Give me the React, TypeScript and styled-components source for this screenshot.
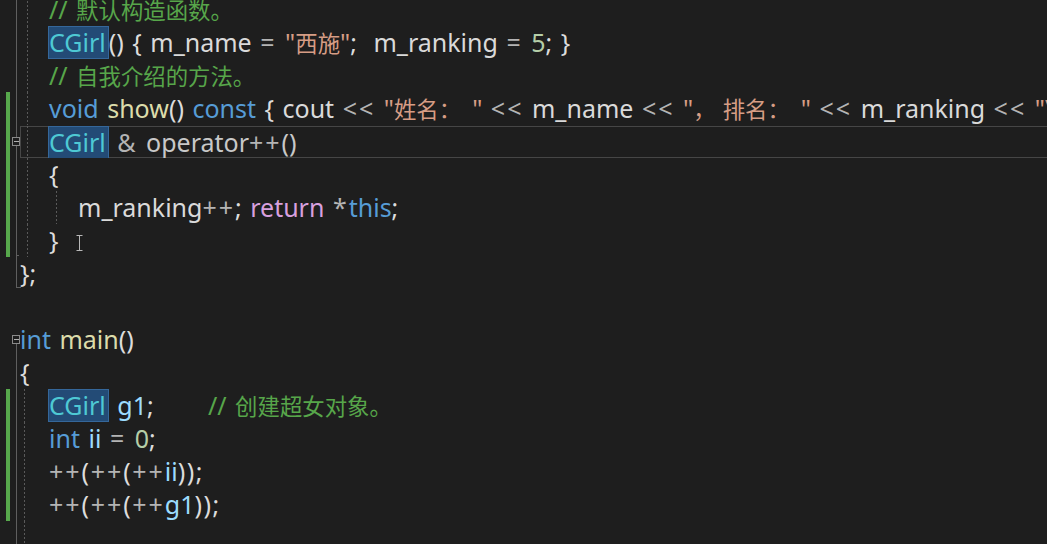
import React from "react";
import styled, { createGlobalStyle, css } from "styled-components";

const Global = createGlobalStyle`
  html, body { margin: 0; padding: 0; background: #1e1e1e; }
  body { width: 1047px; height: 544px; overflow: hidden; }
`;

const Editor = styled.div`
  width: 1047px;
  height: 544px;
  overflow: hidden;
  background: #1e1e1e;
  font-family: "Noto Sans", "Noto Sans CJK SC", sans-serif;
  font-size: 25px;
  color: #dcdcdc;
`;

const Lines = styled.div`
  display: flex;
  flex-direction: column;
  margin-top: -7px;
`;

const Row = styled.div`
  display: flex;
  width: 1070px;
  height: 33px;
  flex-shrink: 0;
`;

const Gutter = styled.div`
  width: 20px;
  flex-shrink: 0;
  display: grid;
  grid-template-columns: 6px 4px 2px 8px;
`;

const ChangeBar = styled.div<{ $on?: boolean }>`
  grid-column: 2;
  background: ${(p) => (p.$on ? "#57a84c" : "transparent")};
`;

type OutlineKind = "none" | "line" | "tick" | "end" | "boxMid" | "boxStart";

const lineColor = "#5f5f5f";

const Outline = styled.div<{ $kind: OutlineKind }>`
  grid-column: 4;
  position: relative;
  display: flex;
  align-items: center;
  ${(p) =>
    (p.$kind === "line" || p.$kind === "tick" || p.$kind === "end") &&
    css`
      &::before {
        content: "";
        position: absolute;
        left: 4px;
        top: 0;
        bottom: ${p.$kind === "end" ? "2px" : "0"};
        width: 1px;
        background: ${lineColor};
      }
    `}
  ${(p) =>
    (p.$kind === "tick" || p.$kind === "end") &&
    css`
      &::after {
        content: "";
        position: absolute;
        left: 4px;
        bottom: ${p.$kind === "end" ? "2px" : "1px"};
        width: ${p.$kind === "end" ? "5px" : "3px"};
        height: 1px;
        background: ${lineColor};
      }
    `}
  ${(p) =>
    (p.$kind === "boxMid" || p.$kind === "boxStart") &&
    css`
      &::before {
        content: "";
        position: absolute;
        left: 4px;
        top: ${p.$kind === "boxMid" ? "0" : "50%"};
        bottom: 0;
        width: 1px;
        background: ${lineColor};
      }
    `}
`;

const FoldBox = styled.span`
  position: relative;
  z-index: 1;
  box-sizing: border-box;
  width: 9px;
  height: 9px;
  border: 1px solid #8a8a8a;
  background: #1e1e1e;
  display: flex;
  align-items: center;
  justify-content: center;
  &::after {
    content: "";
    width: 5px;
    height: 1px;
    background: #b0b0b0;
  }
`;

const Code = styled.div<{ $current?: boolean }>`
  flex: 1;
  display: flex;
  align-items: stretch;
  white-space: pre;
  overflow: hidden;
  ${(p) =>
    p.$current &&
    css`
      box-shadow: inset 0 0 0 1px #464646;
      margin: 0.5px 0;
    `}
`;

const Indent = styled.span<{ $guide?: number }>`
  display: inline-block;
  flex-shrink: 0;
  width: 29px;
  position: relative;
  ${(p) =>
    p.$guide !== undefined &&
    css`
      &::before {
        content: "";
        position: absolute;
        left: ${p.$guide}px;
        top: 0;
        bottom: 0;
        width: 1px;
        background: repeating-linear-gradient(
          to bottom,
          #5a5a5a 0 2px,
          transparent 2px 4px
        );
      }
    `}
`;

const Text = styled.span`
  line-height: 33px;
  white-space: pre;
  word-spacing: 2px;
`;

const Cjk = styled.span`
  font-family: "Noto Sans CJK SC", sans-serif;
  font-size: 22.4px;
  word-spacing: 0;
`;

const FwPunct = styled.span<{ $after?: number }>`
  display: inline-block;
  font-family: "Noto Sans CJK SC", sans-serif;
  font-size: 22.4px;
  margin-right: ${(p) => p.$after ?? 11}px;
`;

const Cm = styled.span`color: #57a64a;`;
const Kw = styled.span`color: #569cd6;`;
const Fn = styled.span`color: #dcdcaa;`;
const Str = styled.span`color: #d69d85;`;
const Ty = styled.span`color: #4ec9d4;`;
const Mem = styled.span`color: #dadada;`;
const Var = styled.span`color: #9cdcfe;`;
const Num = styled.span`color: #b5cea8;`;
const Op = styled.span`color: #b4b4b4; letter-spacing: 2px;`;
const Pu = styled.span<{ $wide?: boolean }>`
  color: #dcdcdc;
  letter-spacing: ${(p) => (p.$wide ? "1.5px" : "0")};
`;
const Ret = styled.span`color: #d8a0df;`;
const Plain = styled.span`color: #c8c8c8;`;

const Gap = styled.span<{ $w: number }>`
  display: inline-block;
  width: ${(p) => p.$w}px;
`;

const Hl = styled.span`
  display: inline-block;
  box-sizing: border-box;
  height: 33px;
  line-height: 31px;
  margin-left: -1px;
  padding-right: 2px;
  border: 1px solid #35679a;
  background: #234b76;
`;

const TabStop = styled.span<{ $w: number }>`
  display: inline-block;
  width: ${(p) => p.$w}px;
`;

const Cursor = styled.svg`
  display: inline-block;
  vertical-align: middle;
  margin-left: 17px;
`;

type LineSpec = {
  bar?: boolean;
  outline: OutlineKind;
  current?: boolean;
  indents?: number[];
  content?: React.ReactNode;
};

const IBeam = () => (
  <Cursor width="7" height="16" viewBox="0 0 7 16">
    <path d="M0.5 0.5h6M3.5 0.5v15M0.5 15.5h6" stroke="#b8b8b8" strokeWidth="1" fill="none" />
  </Cursor>
);

const lines: LineSpec[] = [
  {
    outline: "line",
    indents: [7],
    content: (
      <Cm>
        // <Cjk>默认构造函数。</Cjk>
      </Cm>
    ),
  },
  {
    outline: "line",
    indents: [7],
    content: (
      <>
        <Hl>
          <Ty>CGirl</Ty>
        </Hl>
        <Pu>() {"{"} </Pu>
        <Mem>m_name</Mem> <Op>=</Op>{" "}
        <Str>
          "<Cjk>西施</Cjk>"
        </Str>
        <Pu>; </Pu>
        <Gap $w={8} />
        <Mem>m_ranking</Mem> <Op>=</Op> <Num>5</Num>
        <Pu>; {"}"}</Pu>
      </>
    ),
  },
  {
    outline: "line",
    indents: [7],
    content: (
      <Cm>
        // <Cjk>自我介绍的方法。</Cjk>
      </Cm>
    ),
  },
  {
    bar: true,
    outline: "line",
    indents: [7],
    content: (
      <>
        <Kw>void</Kw> <Fn>show</Fn>
        <Pu>() </Pu>
        <Kw>const</Kw>
        <Pu> {"{"} </Pu>
        <Mem>cout</Mem> <Op>{"<<"}</Op>{" "}
        <Str>
          "<Cjk>姓名</Cjk>
          <FwPunct>：</FwPunct>"
        </Str>{" "}
        <Op>{"<<"}</Op> <Mem>m_name</Mem> <Op>{"<<"}</Op>{" "}
        <Str>
          "<FwPunct $after={7}>，</FwPunct>
          <Cjk>排名</Cjk>
          <FwPunct>：</FwPunct>"
        </Str>{" "}
        <Op>{"<<"}</Op> <Mem>m_ranking</Mem> <Op>{"<<"}</Op> <Str>"\n"</Str>
        <Pu>; {"}"}</Pu>
      </>
    ),
  },
  {
    bar: true,
    outline: "boxMid",
    current: true,
    indents: [7],
    content: (
      <>
        <Hl>
          <Ty>CGirl</Ty>
        </Hl>{" "}
        <Op>&amp;</Op>
        <Plain> operator</Plain>
        <Op>++</Op>
        <Plain>()</Plain>
      </>
    ),
  },
  { bar: true, outline: "line", indents: [7], content: <Pu>{"{"}</Pu> },
  {
    bar: true,
    outline: "line",
    indents: [7, 7],
    content: (
      <>
        <Mem>m_ranking</Mem>
        <Op>++</Op>
        <Pu>; </Pu>
        <Ret>return</Ret> <Op>*</Op>
        <Kw>this</Kw>
        <Pu>;</Pu>
      </>
    ),
  },
  {
    bar: true,
    outline: "tick",
    indents: [7],
    content: (
      <>
        <Pu>{"}"}</Pu>
        <IBeam />
      </>
    ),
  },
  { outline: "end", content: <Pu>{"};"}</Pu> },
  { outline: "none" },
  {
    outline: "boxStart",
    content: (
      <>
        <Kw>int</Kw> <Fn>main</Fn>
        <Pu>()</Pu>
      </>
    ),
  },
  { outline: "line", content: <Pu>{"{"}</Pu> },
  {
    bar: true,
    outline: "line",
    indents: [4],
    content: (
      <>
        <TabStop $w={159}>
          <Hl>
            <Ty>CGirl</Ty>
          </Hl>{" "}
          <Var>g1</Var>
          <Pu>;</Pu>
        </TabStop>
        <Cm>
          // <Cjk>创建超女对象。</Cjk>
        </Cm>
      </>
    ),
  },
  {
    bar: true,
    outline: "line",
    indents: [4],
    content: (
      <>
        <Kw>int</Kw> <Var>ii</Var> <Op>=</Op> <Num>0</Num>
        <Pu>;</Pu>
      </>
    ),
  },
  {
    bar: true,
    outline: "line",
    indents: [4],
    content: (
      <>
        <Op>++</Op>
        <Pu $wide>(</Pu>
        <Op>++</Op>
        <Pu $wide>(</Pu>
        <Op>++</Op>
        <Var>ii</Var>
        <Pu $wide>))</Pu>
        <Pu>;</Pu>
      </>
    ),
  },
  {
    bar: true,
    outline: "line",
    indents: [4],
    content: (
      <>
        <Op>++</Op>
        <Pu $wide>(</Pu>
        <Op>++</Op>
        <Pu $wide>(</Pu>
        <Op>++</Op>
        <Var>g1</Var>
        <Pu $wide>))</Pu>
        <Pu>;</Pu>
      </>
    ),
  },
  { outline: "line", indents: [4] },
  { outline: "line", indents: [4] },
];

export default function App() {
  return (
    <>
      <Global />
      <Editor>
        <Lines>
          {lines.map((l, i) => (
            <Row key={i}>
              <Gutter>
                <ChangeBar $on={l.bar} />
                <Outline $kind={l.outline}>
                  {(l.outline === "boxMid" || l.outline === "boxStart") && <FoldBox />}
                </Outline>
              </Gutter>
              <Code $current={l.current}>
                {(l.indents || []).map((g, j) => (
                  <Indent key={j} $guide={g} />
                ))}
                <Text>{l.content}</Text>
              </Code>
            </Row>
          ))}
        </Lines>
      </Editor>
    </>
  );
}
